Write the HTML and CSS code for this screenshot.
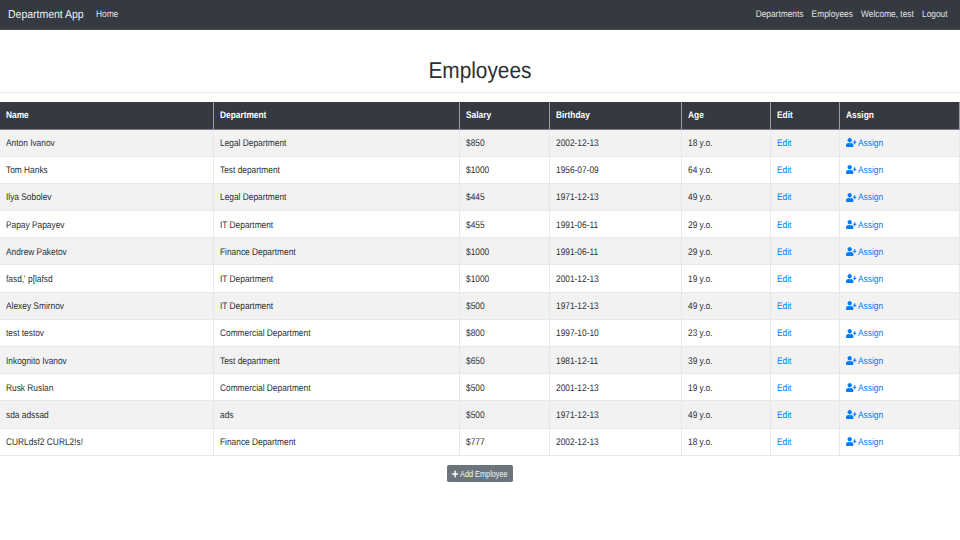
FILE: index.html
```
<!DOCTYPE html>
<html lang="en">
<head>
<meta charset="utf-8">
<title>Employees</title>
<link rel="stylesheet" href="styles.css">
</head>
<body>
<svg width="0" height="0" class="sprite" aria-hidden="true">
  <symbol id="user-plus" viewBox="0 0 640 512" preserveAspectRatio="none"><path d="M624 208h-64v-64c0-8.800-7.200-16-16-16h-32c-8.800 0-16 7.200-16 16v64h-64c-8.800 0-16 7.200-16 16v32c0 8.800 7.200 16 16 16h64v64c0 8.800 7.200 16 16 16h32c8.800 0 16-7.200 16-16v-64h64c8.800 0 16-7.200 16-16v-32c0-8.800-7.200-16-16-16zm-400 48c70.700 0 128-57.300 128-128S294.700 0 224 0 96 57.300 96 128s57.300 128 128 128zm89.600 32h-16.700c-22.200 10.200-46.900 16-72.900 16s-50.600-5.800-72.900-16h-16.700C60.200 288 0 348.200 0 422.400V464c0 26.500 21.500 48 48 48h352c26.500 0 48-21.500 48-48v-41.600c0-74.200-60.200-134.400-134.400-134.400z"/></symbol>
</svg>
<nav class="navbar">
  <a class="brand">Department App</a>
  <a class="nav-home">Home</a>
  <div class="nav-right">
    <a>Departments</a>
    <a>Employees</a>
    <a>Welcome, test</a>
    <a>Logout</a>
  </div>
</nav>
<header class="heading"><h1>Employees</h1></header>
<table class="table">
  <colgroup><col class="c-name"><col class="c-dept"><col class="c-salary"><col class="c-birth"><col class="c-age"><col class="c-edit"><col></colgroup>
  <thead><tr><th><span>Name</span></th><th><span>Department</span></th><th><span>Salary</span></th><th><span>Birthday</span></th><th><span>Age</span></th><th><span>Edit</span></th><th><span>Assign</span></th></tr></thead>
  <tbody>
    <tr><td><span>Anton Ivanov</span></td><td><span>Legal Department</span></td><td><span>$850</span></td><td><span>2002-12-13</span></td><td><span>18 y.o.</span></td><td><a>Edit</a></td><td><svg class="icon"><use href="#user-plus"/></svg><a>Assign</a></td></tr>
    <tr><td><span>Tom Hanks</span></td><td><span>Test department</span></td><td><span>$1000</span></td><td><span>1956-07-09</span></td><td><span>64 y.o.</span></td><td><a>Edit</a></td><td><svg class="icon"><use href="#user-plus"/></svg><a>Assign</a></td></tr>
    <tr><td><span>Ilya Sobolev</span></td><td><span>Legal Department</span></td><td><span>$445</span></td><td><span>1971-12-13</span></td><td><span>49 y.o.</span></td><td><a>Edit</a></td><td><svg class="icon"><use href="#user-plus"/></svg><a>Assign</a></td></tr>
    <tr><td><span>Papay Papayev</span></td><td><span>IT Department</span></td><td><span>$455</span></td><td><span>1991-06-11</span></td><td><span>29 y.o.</span></td><td><a>Edit</a></td><td><svg class="icon"><use href="#user-plus"/></svg><a>Assign</a></td></tr>
    <tr><td><span>Andrew Paketov</span></td><td><span>Finance Department</span></td><td><span>$1000</span></td><td><span>1991-06-11</span></td><td><span>29 y.o.</span></td><td><a>Edit</a></td><td><svg class="icon"><use href="#user-plus"/></svg><a>Assign</a></td></tr>
    <tr><td><span>fasd,' p[lafsd</span></td><td><span>IT Department</span></td><td><span>$1000</span></td><td><span>2001-12-13</span></td><td><span>19 y.o.</span></td><td><a>Edit</a></td><td><svg class="icon"><use href="#user-plus"/></svg><a>Assign</a></td></tr>
    <tr><td><span>Alexey Smirnov</span></td><td><span>IT Department</span></td><td><span>$500</span></td><td><span>1971-12-13</span></td><td><span>49 y.o.</span></td><td><a>Edit</a></td><td><svg class="icon"><use href="#user-plus"/></svg><a>Assign</a></td></tr>
    <tr><td><span>test testov</span></td><td><span>Commercial Department</span></td><td><span>$800</span></td><td><span>1997-10-10</span></td><td><span>23 y.o.</span></td><td><a>Edit</a></td><td><svg class="icon"><use href="#user-plus"/></svg><a>Assign</a></td></tr>
    <tr><td><span>Inkognito Ivanov</span></td><td><span>Test department</span></td><td><span>$650</span></td><td><span>1981-12-11</span></td><td><span>39 y.o.</span></td><td><a>Edit</a></td><td><svg class="icon"><use href="#user-plus"/></svg><a>Assign</a></td></tr>
    <tr><td><span>Rusk Ruslan</span></td><td><span>Commercial Department</span></td><td><span>$500</span></td><td><span>2001-12-13</span></td><td><span>19 y.o.</span></td><td><a>Edit</a></td><td><svg class="icon"><use href="#user-plus"/></svg><a>Assign</a></td></tr>
    <tr><td><span>sda adssad</span></td><td><span>ads</span></td><td><span>$500</span></td><td><span>1971-12-13</span></td><td><span>49 y.o.</span></td><td><a>Edit</a></td><td><svg class="icon"><use href="#user-plus"/></svg><a>Assign</a></td></tr>
    <tr><td><span>CURLdsf2 CURL2!s!</span></td><td><span>Finance Department</span></td><td><span>$777</span></td><td><span>2002-12-13</span></td><td><span>18 y.o.</span></td><td><a>Edit</a></td><td><svg class="icon"><use href="#user-plus"/></svg><a>Assign</a></td></tr>
  </tbody>
</table>
<div class="actions">
  <button class="btn"><svg class="plus" viewBox="0 0 448 512" preserveAspectRatio="none"><path d="M416 208H272V64c0-17.700-14.300-32-32-32h-32c-17.700 0-32 14.300-32 32v144H32c-17.700 0-32 14.300-32 32v32c0 17.700 14.300 32 32 32h144v144c0 17.700 14.300 32 32 32h32c17.700 0 32-14.300 32-32V304h144c17.700 0 32-14.300 32-32v-32c0-17.700-14.300-32-32-32z"/></svg><span>Add Employee</span></button>
</div>
</body>
</html>
```
FILE: styles.css
```
* { box-sizing: border-box; }
body {
  margin: 0;
  background: #fff;
  color: #2c3034;
  font: 9.6px/14px "Liberation Sans", Arial, sans-serif;
  text-rendering: geometricPrecision;
}
.sprite { display: none; }

/* Condensed text: glyphs are narrowed towards their anchored edge. */
.brand, .nav-home, th span, td span, td a, .btn span {
  display: inline-block;
  transform: scaleX(0.87);
  transform-origin: 0 50%;
  white-space: nowrap;
}

.navbar {
  display: flex;
  align-items: center;
  height: 30px;
  padding: 1px 12.3px 0 8px;
  border-bottom: 1px solid #4b5055;
  background: #343a40;
  color: #e0e1e2;
}
.brand { width: 87.8px; font-size: 11.5px; transform: scaleX(0.91); color: #eeeff0; }
.nav-right {
  display: flex;
  gap: 9.4px;
  margin-left: auto;
  transform: scaleX(0.87);
  transform-origin: 100% 50%;
}

.heading {
  display: flex;
  justify-content: center;
  height: 63px;
  margin-bottom: 9px;
  padding-top: 26.6px;
  border-bottom: 1px solid #ebebeb;
}
h1 {
  margin: 0;
  font-size: 23px;
  line-height: 27px;
  font-weight: 400;
  transform: scaleX(0.905);
}

.table { width: 100%; table-layout: fixed; border-collapse: separate; border-spacing: 0; }
.c-name { width: 214px; }
.c-dept { width: 246px; }
.c-salary { width: 90px; }
.c-birth { width: 132px; }
.c-age { width: 89px; }
.c-edit { width: 69px; }
th, td {
  height: 27.2px;
  padding: 3px 6px 0;
  border-right: 1px solid #e6e9ec;
  border-bottom: 1px solid #e6e9ec;
  text-align: left;
}
th { height: 27.5px; padding-top: 2px; background: #343a40; color: #fff; border-right-color: #9a9ea3; border-bottom-color: #7b8086; }
tbody tr:nth-child(odd) { background: #f2f2f2; }
td a { color: #007bff; }
.icon { width: 10.6px; height: 9px; margin-right: 1.8px; fill: #007bff; vertical-align: -1.2px; }

.actions { display: flex; justify-content: center; margin-top: 9px; }
.btn {
  display: flex;
  align-items: center;
  gap: 2px;
  width: 66px;
  height: 17.5px;
  padding: 1.5px 0 0 5px;
  border: 0;
  border-radius: 1.7px;
  background: #6c757d;
  color: #f4f5f6;
  font: 8.4px/12px "Liberation Sans", Arial, sans-serif;
}
.btn span { transform: scaleX(0.875); }
.plus { flex: none; width: 6.3px; height: 8px; fill: #fff; }
```
